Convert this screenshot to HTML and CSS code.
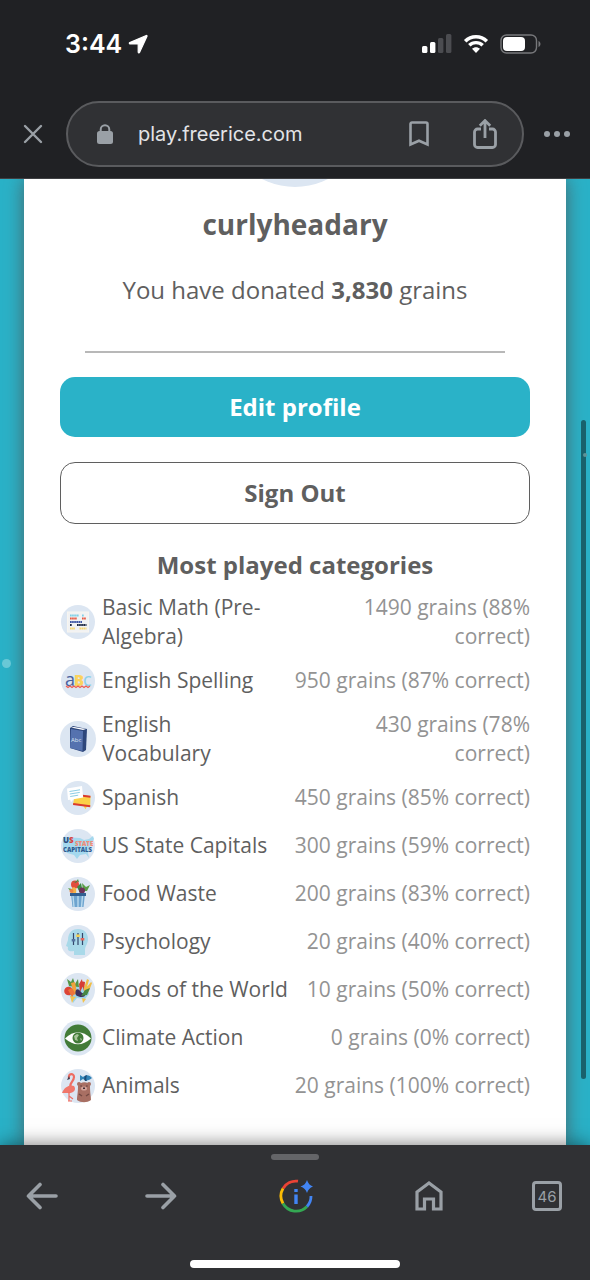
FILE: index.html
```html
<!DOCTYPE html>
<html lang="en">
<head>
    <meta charset="UTF-8">
    <meta name="viewport" content="width=device-width, initial-scale=1.0">
    <title>Freerice</title>
    <link rel="stylesheet" href="styles.css">
</head>
<body>
    <header class="browser-top">
        <div class="status-bar">
            <span class="time">3:44</span>
            <svg width="20" height="20" viewBox="0 0 20 20"><path d="M18.300 1.500 1.800 8.600c-.7.400-.6 1.300.2 1.300h8.200v8.200c0 .9 1 1.100 1.300.3L19 2.200c.2-.5-.2-.9-.7-.7z" fill="#fff" stroke="#fff" stroke-width="1.200"/></svg>
            <div class="status-icons">
                <svg width="30" height="20" viewBox="0 0 30 20">
                    <rect x="0" y="12" width="5.400" height="7" rx="1.500" fill="#fff"/>
                    <rect x="8" y="8" width="5.400" height="11" rx="1.500" fill="#fff"/>
                    <rect x="16" y="4" width="5.400" height="15" rx="1.500" fill="#4b4c50"/>
                    <rect x="24" y="0" width="5.400" height="19" rx="1.500" fill="#4b4c50"/>
                </svg>
                <svg width="26" height="20" viewBox="0 0 26 20">
                    <path d="M2.200 7.200C8.200 1.200 17.800 1.200 23.800 7.200" fill="none" stroke="#fff" stroke-width="3.600"/>
                    <path d="M6.300 11.300c3.700-3.600 9.700-3.600 13.400 0" fill="none" stroke="#fff" stroke-width="3.400"/>
                    <path d="M13 19l-4-4.200c2.200-2.200 5.800-2.200 8 0z" fill="#fff"/>
                </svg>
                <svg width="41" height="20" viewBox="0 0 41 20">
                    <rect x="1" y="1" width="35.500" height="18" rx="5.500" fill="none" stroke="#77787b" stroke-width="1.400"/>
                    <rect x="3" y="3" width="22" height="14" rx="4" fill="#fff"/>
                    <path d="M38.500 7c2.600 1 2.600 5 0 6z" fill="#77787b"/>
                </svg>
            </div>
        </div>
        <div class="toolbar">
            <button class="icon-btn" aria-label="Close">
                <svg width="20" height="20" viewBox="0 0 20 20"><path d="M2 2l16 16M18 2L2 18" stroke="#9aa0a6" stroke-width="2.400" stroke-linecap="round"/></svg>
            </button>
            <div class="address-bar">
                <svg width="16" height="20" viewBox="0 0 16 20">
                    <rect x="0" y="7" width="16" height="13" rx="2.500" fill="#9aa0a6"/>
                    <path d="M3.700 8V5.500a4.300 4.300 0 0 1 8.600 0V8" fill="none" stroke="#9aa0a6" stroke-width="2"/>
                </svg>
                <input type="text" class="url" value="play.freerice.com" aria-label="Address">
                <button class="icon-btn" aria-label="Bookmark">
                    <svg width="20" height="26" viewBox="0 0 20 26"><path d="M1.500 23.500V3a1.500 1.500 0 0 1 1.500-1.500h14A1.500 1.500 0 0 1 18.500 3v20.500L10 19.700z" fill="none" stroke="#9aa0a6" stroke-width="2.600"/></svg>
                </button>
                <button class="icon-btn" aria-label="Share">
                    <svg width="24" height="30" viewBox="0 0 24 30"><path d="M8 10H4.500a3 3 0 0 0-3 3v12.500a3 3 0 0 0 3 3h15a3 3 0 0 0 3-3V13a3 3 0 0 0-3-3H16M12 19V2M6.800 6.800L12 1.600l5.200 5.200" fill="none" stroke="#9aa0a6" stroke-width="2.800"/></svg>
                </button>
            </div>
            <button class="icon-btn" aria-label="More">
                <svg width="26" height="6" viewBox="0 0 26 6" fill="#9aa0a6"><circle cx="3" cy="3" r="3"/><circle cx="13" cy="3" r="3"/><circle cx="23" cy="3" r="3"/></svg>
            </button>
        </div>
    </header>

    <main class="page">
        <span class="bubble bubble-left"></span>
        <div class="card">
            <div class="avatar"></div>
            <h1>curlyheadary</h1>
            <p class="donated">You have donated <strong>3,830</strong> grains</p>
            <hr>
            <button class="btn btn-primary">Edit profile</button>
            <button class="btn btn-outline">Sign Out</button>
            <h2>Most played categories</h2>
            <ul class="categories">
                <li>
                    <svg class="cat-icon" viewBox="0 0 36 36">
                        <circle cx="18" cy="18" r="17" fill="#dce6f2"/>
                        <rect x="7.500" y="8" width="21" height="20" fill="#f1f2f3" stroke="#f7f5f0"/>
                        <g fill="none" stroke-width="2.200" stroke-dasharray="1.700 .4">
                            <path d="M10 11.500h9M22 11.500h2" stroke="#7fd0e6"/>
                            <path d="M10 14.500h7M22 14.500h4" stroke="#e8563f"/>
                            <path d="M10 18h12" stroke="#3e56a4"/>
                            <path d="M10 21h2M17 21h9.500" stroke="#1f2a44"/>
                            <path d="M10 24.500h5M19.500 24.500h7" stroke="#f7d56e"/>
                        </g>
                    </svg>
                    <span class="name">Basic Math (Pre-Algebra)</span>
                    <span class="score">1490 grains (88% correct)</span>
                </li>
                <li>
                    <svg class="cat-icon" viewBox="0 0 36 36">
                        <circle cx="18" cy="18" r="17" fill="#dce6f2"/>
                        <text x="5" y="23" font-size="18" font-weight="500" fill="#4860a0">a</text>
                        <text x="14" y="23" font-size="15" font-weight="800" fill="#fbd35f">B</text>
                        <text x="23" y="23" font-size="18" font-weight="500" fill="#8bd0e8">c</text>
                        <path d="M6 23l2 1.500 2-1.500 2 1.500 2-1.500 2 1.500 2-1.500 2 1.500 2-1.500 2 1.500 2-1.500 2 1.500 2-1.500" fill="none" stroke="#ef5d50" stroke-width="1.300"/>
                    </svg>
                    <span class="name">English Spelling</span>
                    <span class="score">950 grains (87% correct)</span>
                </li>
                <li>
                    <svg class="cat-icon" viewBox="0 0 36 36">
                        <circle cx="18" cy="18" r="18" fill="#dce6f2"/>
                        <path d="M10 7l3-2 14 3-1 21-3 2-13-4z" fill="#2d467b"/>
                        <path d="M11 6.500l12 2.500 3-1-12-2z" fill="#fff"/>
                        <path d="M11 8l12 2-.5 20L10 27z" fill="#5572af"/>
                        <text x="11" y="21" font-size="6" fill="#dce6f2">Abc</text>
                    </svg>
                    <span class="name">English Vocabulary</span>
                    <span class="score">430 grains (78% correct)</span>
                </li>
                <li>
                    <svg class="cat-icon" viewBox="0 0 36 36">
                        <circle cx="18" cy="18" r="17" fill="#dce6f2"/>
                        <path d="M15 14l15.500 2-.3 10.500-3.200-.2-1.500 3-2.300-3.500L13 24.500z" fill="#fbd047"/>
                        <path d="M15 13.800l15.500 2-.1 2-16-2zM13.300 23l17 2.300-.1 2-17.200-2.200z" fill="#d93a2f"/>
                        <path d="M7 8.500L22 6l1.200 11.500-9.700 1.700-2.500 3-.8-2.400-2.200.2z" fill="#fff"/>
                        <path d="M9.500 11.500l10.500-1.700M9.800 14l10-1.600M10.200 16.500l8-1.300" stroke="#8ccde5" stroke-width="1"/>
                    </svg>
                    <span class="name">Spanish</span>
                    <span class="score">450 grains (85% correct)</span>
                </li>
                <li>
                    <svg class="cat-icon" viewBox="0 0 36 36">
                        <circle cx="18" cy="18" r="17" fill="#dce6f2"/>
                        <path d="M3 9l17 1 4 2 5-1 4-3 1 3-4 6-2 8 1 5-3-4-6 1-3 4-3-4-7-2-4-5z" fill="#a4d8ee"/>
                        <text x="3" y="15" font-size="8" font-weight="800" fill="#2e4f83">U</text>
                        <text x="9" y="15" font-size="8" font-weight="800" fill="#d84443">S</text>
                        <text x="15" y="18" font-size="6" font-weight="800" fill="#f08b76">STATE</text>
                        <text x="3" y="24" font-size="6" font-weight="800" fill="#2e5c91">CAPITALS</text>
                    </svg>
                    <span class="name">US State Capitals</span>
                    <span class="score">300 grains (59% correct)</span>
                </li>
                <li>
                    <svg class="cat-icon" viewBox="0 0 36 36">
                        <circle cx="18" cy="18" r="17" fill="#dce6f2"/>
                        <path d="M11 16l-3-4 4 1M23 15l-1-8 4 4 4-2-3 6M16 6l2-3 1 3" fill="#5b9d48"/>
                        <circle cx="15" cy="8.500" r="4" fill="#e24d3d"/>
                        <path d="M12 5l3 1 3-2-2 3zM17 11l4-4 1 5-2 5z" fill="#3c8a45"/>
                        <path d="M12 12c3-2 5 1 4 5h-4z" fill="#f3b54a"/>
                        <circle cx="22" cy="14.500" r="3" fill="#6d3158"/>
                        <circle cx="11.500" cy="15" r="2" fill="#ed8447"/>
                        <path d="M11 18h14l-1.500 13h-11z" fill="#6ea4cf"/>
                        <path d="M10 17h16v3H10z" fill="#315f91"/>
                        <path d="M13 20l1 11M18 20v11M22.500 20l-1 11" stroke="#b8d9ed" stroke-width="1.400"/>
                    </svg>
                    <span class="name">Food Waste</span>
                    <span class="score">200 grains (83% correct)</span>
                </li>
                <li>
                    <svg class="cat-icon" viewBox="0 0 36 36">
                        <circle cx="18" cy="18" r="17" fill="#dce6f2"/>
                        <path d="M14 31v-4c-4 1-7 0-6-4l-2-1 2-6C8 8 13 5 18 5c6 0 10 4 10 10 0 5-3 7-3 11v5z" fill="#a8d9e9"/>
                        <path d="M13.500 9v12M18 9v12M22.500 9v12" stroke="#33466b" stroke-width="1.200"/>
                        <rect x="11.700" y="15" width="3.600" height="2.500" fill="#54729e"/>
                        <rect x="16.200" y="10.500" width="3.600" height="2.500" fill="#f2cf55"/>
                        <rect x="20.700" y="14" width="3.600" height="2.500" fill="#e4665b"/>
                    </svg>
                    <span class="name">Psychology</span>
                    <span class="score">20 grains (40% correct)</span>
                </li>
                <li>
                    <svg class="cat-icon" viewBox="0 0 36 36">
                        <circle cx="18" cy="18" r="17" fill="#dce6f2"/>
                        <path d="M5 20l7 6 1 5 4-5 8 1 4-5-1-8H9z" fill="#9cd3e8"/>
                        <path d="M10 24l2 7 2-4 2-2zM22 26l1 5 3-4" fill="#f2c34e"/>
                        <path d="M9 14L7 7l4 3 2-4 2 6 3-5 1 8z" fill="#559646"/>
                        <path d="M11 11l4-1 2 11-3 2z" fill="#f2a13c"/>
                        <path d="M19 12l3-5 1 7-3 6zM21 9l4 1-1 9" fill="#d63e35"/>
                        <path d="M24 16l3-9 2 1-2 7 4-5 1 1-3 8-5 5z" fill="#f1bd45"/>
                        <circle cx="8.500" cy="19" r="4.300" fill="#dc4436"/>
                        <path d="M8 18l4-2 3 5-3 4z" fill="#ee7339"/>
                        <path d="M16 18c2-2 4 1 6 3 4 0 4 4 0 4-5 0-8-2-6-7z" fill="#3f315c"/>
                        <path d="M25 18l5-2-3 7-6 1z" fill="#478745"/>
                    </svg>
                    <span class="name">Foods of the World</span>
                    <span class="score">10 grains (50% correct)</span>
                </li>
                <li>
                    <svg class="cat-icon" viewBox="0 0 36 36">
                        <circle cx="18" cy="18" r="17.500" fill="#dce6f2"/>
                        <circle cx="18" cy="18" r="13.500" fill="#427b38"/>
                        <path d="M5 18.500Q18 6 31 18.500 18 30 5 18.500z" fill="#fff"/>
                        <circle cx="18" cy="18" r="5.500" fill="#427b38"/>
                        <path d="M14 16l3-2 2 1-2 3 1 3-3-1zM20 18l2 1-1 2z" fill="#a7c49a"/>
                    </svg>
                    <span class="name">Climate Action</span>
                    <span class="score">0 grains (0% correct)</span>
                </li>
                <li>
                    <svg class="cat-icon" viewBox="0 0 36 36">
                        <circle cx="18" cy="18" r="17" fill="#dce6f2"/>
                        <path d="M20 7l3 2c3-3 7-2 9 1-3 3-7 3-9 1l-3 2z" fill="#3283b6"/>
                        <path d="M25 8c-1 2-1 3 0 5h2c-1-2-1-3 0-6z" fill="#1b4b78"/>
                        <path d="M9 10c-1-5 5-5 5-1 0 5-6 7-3 10" fill="none" stroke="#ee6d62" stroke-width="2.200"/>
                        <path d="M9 8l-2 4 3-1z" fill="#443d4d"/>
                        <path d="M2 25c2-6 8-9 12-7 3 4-1 8-7 7z" fill="#f0776b"/>
                        <path d="M9 24v9M9 28l4 3M8 33h4" fill="none" stroke="#ee6d62" stroke-width="1.200"/>
                        <path d="M17 32c0-4 1-7 1-14 2-5 11-5 12 0 0 7 1 10 1 14-4 3-10 3-14 0z" fill="#a86f63"/>
                        <circle cx="19" cy="16" r="2" fill="#a86f63"/><circle cx="29" cy="16" r="2" fill="#a86f63"/>
                        <ellipse cx="24" cy="20.500" rx="3" ry="2" fill="#d4a39a"/>
                        <path d="M23 20h2l-1 1zM20.500 18h1.200M26.300 18h1.200" stroke="#402b32" stroke-width="1"/>
                        <path d="M19 26l3 2M29 26l-3 2" stroke="#744943" stroke-width="1.500"/>
                    </svg>
                    <span class="name">Animals</span>
                    <span class="score">20 grains (100% correct)</span>
                </li>
            </ul>
        </div>
        <span class="scroll-thumb"></span>
        <span class="bubble bubble-right"></span>
    </main>

    <footer class="browser-bottom">
        <div class="grip"></div>
        <nav class="nav">
            <button class="icon-btn" aria-label="Back">
                <svg width="32" height="28" viewBox="0 0 32 28"><path d="M30 14H2.500M14 2.500L2.500 14 14 25.500" fill="none" stroke="#9aa0a6" stroke-width="3.600" stroke-linecap="round" stroke-linejoin="round"/></svg>
            </button>
            <button class="icon-btn" aria-label="Forward">
                <svg width="32" height="28" viewBox="0 0 32 28"><path d="M2 14h27.500M18 2.500L29.500 14 18 25.500" fill="none" stroke="#9aa0a6" stroke-width="3.600" stroke-linecap="round" stroke-linejoin="round"/></svg>
            </button>
            <button class="icon-btn" aria-label="Page info">
                <svg width="34" height="34" viewBox="0 0 34 34">
                    <g fill="none" stroke-width="2.800">
                        <path d="M19 2.200A15 15 0 0 0 4 9.500" stroke="#ea4335"/>
                        <path d="M4 9.500a15 15 0 0 0 0 15" stroke="#fbbc04"/>
                        <path d="M4 24.500A15 15 0 0 0 28 27.500" stroke="#34a853"/>
                        <path d="M28 27.500A15 15 0 0 0 32 17" stroke="#4285f4"/>
                    </g>
                    <path d="M15.300 10h3.400v3h-3.400zM15.300 15.500h3.400V25h-3.400z" fill="#4285f4"/>
                    <path d="M28 1q1.500 5 6 6.500-4.500 1.500-6 6.500-1.500-5-6.500-6.500Q26.500 6 28 1z" fill="#4285f4"/>
                </svg>
            </button>
            <button class="icon-btn" aria-label="Home">
                <svg width="28" height="30" viewBox="0 0 28 30"><path d="M2 28V11L14 2l12 9v17h-7.500V18h-9v10z" fill="none" stroke="#9aa0a6" stroke-width="3.200"/></svg>
            </button>
            <button class="icon-btn tabs" aria-label="Open tabs">46</button>
        </nav>
        <div class="home-indicator"></div>
    </footer>
</body>
</html>
```
FILE: styles.css
```css
* {
    margin: 0;
    padding: 0;
    box-sizing: border-box;
}
body {
    min-height: 100vh;
    display: flex;
    flex-direction: column;
    background: #2ab2c8;
    font-family: 'Open Sans', sans-serif;
    color: #5f5f5f;
}
button {
    font-family: inherit;
    cursor: pointer;
}
svg {
    display: block;
    flex-shrink: 0;
}
.icon-btn {
    display: flex;
    align-items: center;
    justify-content: center;
    background: none;
    border: none;
}

/* top bars */
.browser-top {
    background: #202124;
    padding: 28px 0 11px;
    border-bottom: 1px solid #3f4043;
}
.status-bar {
    display: flex;
    align-items: center;
    height: 32px;
    gap: 6px;
    padding: 0 49px 0 65px;
}
.time {
    font-family: Inter, sans-serif;
    font-size: 25px;
    font-weight: 600;
    color: #fff;
}
.status-icons {
    display: flex;
    align-items: center;
    gap: 11px;
    margin-left: auto;
}
.toolbar {
    display: grid;
    grid-template-columns: 66px minmax(0, 1fr) 66px;
    margin-top: 41px;
}
.address-bar {
    display: flex;
    align-items: center;
    height: 66px;
    padding: 0 25px 0 29px;
    background: #303134;
    border: 2px solid #5a5b5e;
    border-radius: 33px;
}
.url {
    flex: 1;
    min-width: 0;
    margin-left: 25px;
    background: none;
    border: none;
    outline: none;
    font-family: Inter, sans-serif;
    font-size: 20px;
    color: #e3e4e7;
}
.address-bar .icon-btn + .icon-btn {
    margin-left: 44px;
}

/* page */
.page {
    position: relative;
    flex: 1;
    display: flex;
    flex-direction: column;
    overflow: hidden;
    padding: 0 24px;
}
.card {
    display: flow-root;
    flex: 1;
    padding: 0 36px 34px;
    background: #fff;
    box-shadow: 0 0 18px rgba(80, 80, 80, 0.8);
    text-align: center;
}
.avatar {
    width: 144px;
    height: 144px;
    margin: -136px auto 0;
    border-radius: 50%;
    background: #dce6f2;
}
h1 {
    margin-top: 19px;
    font-size: 28px;
    line-height: 36px;
}
.donated {
    margin-top: 32px;
    font-size: 24px;
    line-height: 32px;
}
hr {
    margin: 45px 25px 24px;
    border: none;
    border-top: 2px solid #b8b8b8;
}
.btn {
    display: block;
    width: 100%;
    border-radius: 15px;
    font-size: 24px;
    font-weight: 700;
    line-height: 32px;
}
.btn-primary {
    padding: 14px;
    background: #2ab2c8;
    border: none;
    color: #fff;
}
.btn-outline {
    margin-top: 25px;
    padding: 14px;
    background: #fff;
    border: 1px solid #5f5f5f;
    color: #5f5f5f;
}
h2 {
    margin-top: 25px;
    font-size: 24px;
    line-height: 32px;
}
.categories {
    margin-top: 6px;
    list-style: none;
}
.categories li {
    display: flex;
    align-items: center;
    min-height: 48px;
    padding: 6px 0 5px;
    font-size: 21px;
    line-height: 29px;
}
.cat-icon {
    width: 36px;
    height: 36px;
    margin-right: 6px;
}
.name {
    text-align: left;
}
.score {
    margin-left: auto;
    padding-left: 12px;
    color: #939393;
    text-align: right;
}

/* things floating over the page */
.bubble {
    position: absolute;
    border-radius: 50%;
}
.bubble-left {
    top: 480px;
    left: 2px;
    width: 9px;
    height: 9px;
    background: #68c8d6;
}
.bubble-right {
    top: 274px;
    right: 3px;
    width: 4px;
    height: 4px;
    background: #5e9298;
}
.scroll-thumb {
    position: absolute;
    top: 241px;
    bottom: 66px;
    right: 4px;
    width: 5px;
    border-radius: 3px;
    background: #19616c;
}

/* bottom bar */
.browser-bottom {
    position: relative;
    padding: 9px 0 12px;
    background: #303134;
    box-shadow: 0 0 18px rgba(0, 0, 0, 0.55);
}
.grip {
    width: 48px;
    height: 6px;
    margin: 0 auto;
    border-radius: 3px;
    background: #646568;
}
.nav {
    display: grid;
    grid-template-columns: 84fr 154fr 116fr 150fr 86fr;
    align-items: center;
    justify-items: center;
    height: 72px;
}
.tabs {
    width: 30px;
    height: 30px;
    border: 3px solid #9aa0a6;
    border-radius: 4px;
    font-family: Inter, sans-serif;
    font-size: 15px;
    color: #9aa0a6;
}
.home-indicator {
    width: 210px;
    height: 8px;
    margin: 28px auto 0;
    border-radius: 4px;
    background: #fff;
}
```
